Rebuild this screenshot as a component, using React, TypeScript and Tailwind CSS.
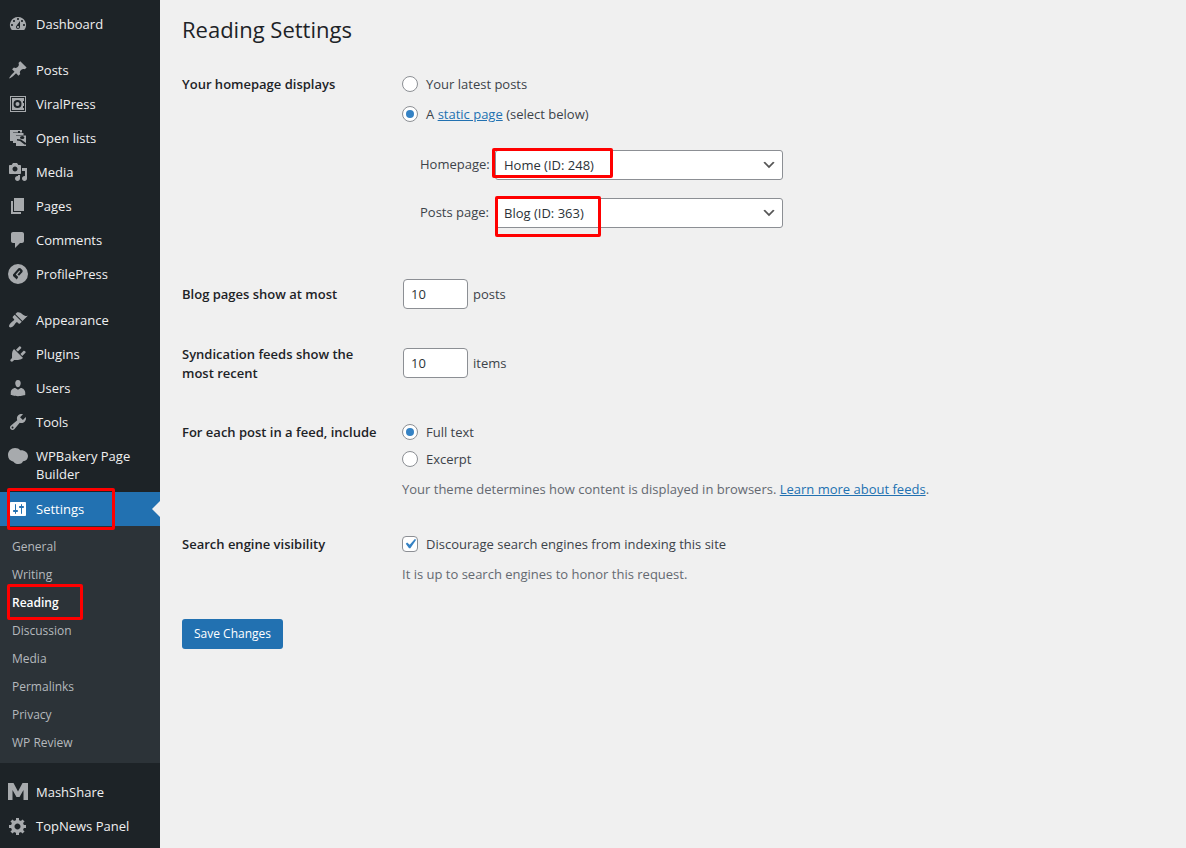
import { useState } from "react";
import type { ReactNode } from "react";
import clsx from "clsx";

type MenuItem = {
  label: string;
  icon: ReactNode;
  tall?: boolean;
};

function Icon({ d }: { d: string }) {
  return (
    <svg viewBox="0 0 20 20" className="size-5" fill="currentColor" fillRule="evenodd" aria-hidden="true">
      <path d={d} />
    </svg>
  );
}

const icons = {
  dashboard:
    "M3.76 16h12.48A7.998 7.998 0 0 0 10 3a7.998 7.998 0 0 0-6.24 13zM10 4c.55 0 1 .45 1 1s-.45 1-1 1-1-.45-1-1 .45-1 1-1zM6 6c.55 0 1 .45 1 1s-.45 1-1 1-1-.45-1-1 .45-1 1-1zm8 0c.55 0 1 .45 1 1s-.45 1-1 1-1-.45-1-1 .45-1 1-1zm-5.37 5.55L12 7v6c0 1.1-.9 2-2 2s-2-.9-2-2c0-.57.24-1.08.63-1.45zM4 10c.55 0 1 .45 1 1s-.45 1-1 1-1-.45-1-1 .45-1 1-1zm12 0c.55 0 1 .45 1 1s-.45 1-1 1-1-.45-1-1 .45-1 1-1zm-5 3c0-.55-.45-1-1-1s-1 .45-1 1 .45 1 1 1 1-.45 1-1z",
  post: "M10.44 3.02l1.82-1.82 6.36 6.35-1.83 1.82c-1.05-.68-2.48-.57-3.41.36l-.75.75c-.92.93-1.04 2.35-.35 3.41l-1.83 1.82-2.41-2.41-2.8 2.79c-.42.42-3.38 2.71-3.8 2.29s1.86-3.39 2.28-3.81l2.79-2.79L4.1 9.36l1.83-1.82c1.05.69 2.48.57 3.4-.36l.75-.75c.93-.92 1.05-2.35.36-3.41z",
  vault:
    "M2 2h16v16H2zM3 3v14h14V3zM4 4h12v3h-1v2h1v3h-1v2h1v2H4zM9.500 6a4 4 0 1 0 0 8 4 4 0 0 0 0-8zM9.500 8a2 2 0 1 1 0 4 2 2 0 0 1 0-4z",
  images:
    "M2 2h12v2.500H5V13H2zM5 5h10.500v2H8v8H5zM8 7.500h10V18H8zM12 9.500a2.200 1.500 0 1 0 4.400 0 2.200 1.500 0 1 0-4.400 0zM9 12.500l3 .5 4.500 3.500H18V15l-5-3.500-4-.5zM10 3h2v1.500h-2z",
  media:
    "M13 11V4c0-.55-.45-1-1-1h-1.67L9 1H5L3.67 3H2c-.55 0-1 .45-1 1v7c0 .55.45 1 1 1h10c.55 0 1-.45 1-1zM7 4.5c1.38 0 2.5 1.12 2.5 2.5S8.38 9.5 7 9.5 4.5 8.38 4.5 7 5.62 4.5 7 4.5zM14 6h5v10.5c0 1.38-1.12 2.5-2.5 2.5S14 17.88 14 16.5s1.12-2.5 2.5-2.5c.17 0 .34.02.5.05V9h-3V6zm-4 8.05V13h2v3.5c0 1.38-1.12 2.5-2.5 2.5S7 17.88 7 16.5 8.12 14 9.5 14c.17 0 .34.02.5.05z",
  page: "M6 15V2h10v13H6zm-1 1h8v2H3V5h2v11z",
  comments:
    "M5 2h9c1.1 0 2 .9 2 2v7c0 1.1-.9 2-2 2h-2l-5 5v-5H5c-1.1 0-2-.9-2-2V4c0-1.1.9-2 2-2z",
  profile:
    "M10 0a10 10 0 1 0 0 20 10 10 0 0 0 0-20zM5 10.500L10.500 4.300Q11.500 3.500 12.500 4.300L14.300 6Q15.200 7 14.300 8.200L11 11.800 9.500 10.400 12.300 7.300 11.400 6.500 7.700 10.600 10.200 13 8.800 15.500 5 12z",
  appearance:
    "M14.48 11.06L7.41 3.99l1.5-1.5c.5-.56 2.3-.47 3.51.32 1.21.8 1.43 1.28 2.91 2.1 1.18.64 2.45 1.26 4.45.85zm-.71.71L6.7 4.7 4.93 6.47c-.39.39-.39 1.02 0 1.41l1.06 1.06c.39.39.39 1.03 0 1.42-.6.6-1.43 1.11-2.21 1.69-.35.26-.7.53-1.01.84C1.43 14.23.4 16.08 1.4 17.07c.99 1 2.84-.03 4.18-1.36.31-.31.58-.66.85-1.02.57-.78 1.08-1.61 1.69-2.21.39-.39 1.02-.39 1.41 0l1.06 1.06c.39.39 1.02.39 1.41 0z",
  plugins:
    "M13.11 4.36L9.87 7.6 8 5.73l3.24-3.24c.35-.34 1.05-.2 1.56.32.52.51.66 1.21.31 1.55zm-8 1.77l.91-1.12 9.01 9.01-1.19.84c-.71.71-2.63 1.16-3.82 1.16H6.14L4.9 17.26c-.59.59-1.54.59-2.12 0-.59-.58-.59-1.53 0-2.12l1.24-1.24v-3.88c0-1.13.4-3.19 1.09-3.89zm7.26 3.97l3.24-3.24c.34-.35 1.04-.21 1.55.31.52.51.66 1.21.31 1.55l-3.24 3.25z",
  users:
    "M10 9.25c-2.27 0-2.73-3.44-2.73-3.44C7 4.02 7.82 2 9.97 2c2.16 0 2.98 2.02 2.71 3.81 0 0-.41 3.44-2.68 3.44zm0 2.57L12.72 10c2.39 0 4.52 2.33 4.52 4.53v2.49s-3.65 1.13-7.24 1.13c-3.65 0-7.24-1.13-7.24-1.13v-2.49c0-2.25 1.94-4.48 4.47-4.48z",
  tools:
    "M16.68 9.77c-1.34 1.34-3.3 1.67-4.95.99l-5.41 6.52c-.99.99-2.59.99-3.58 0s-.99-2.59 0-3.57l6.52-5.42c-.68-1.65-.35-3.61.99-4.95 1.28-1.28 3.12-1.62 4.72-1.06l-2.89 2.89 2.82 2.82 2.86-2.87c.53 1.58.18 3.39-1.08 4.65zM3.81 16.21c.4.39 1.04.39 1.43 0 .4-.4.4-1.04 0-1.43-.39-.4-1.03-.4-1.43 0-.39.39-.39 1.03 0 1.43z",
  bakery:
    "M0 9C0 5 3 2 7 2c2.500 0 4 .800 5.200 2.200C16.500 3.800 20 6.500 20 10c0 3-2 5-5 5.300-.5 1.600-2 2.700-4.500 2.700-2.300 0-4-.700-5-2.300C2 15 0 12.500 0 9z",
  settings:
    "M18 16V4c0-.55-.45-1-1-1H3c-.55 0-1 .45-1 1v12c0 .55.45 1 1 1h14c.55 0 1-.45 1-1zM8 11h1c.55 0 1 .45 1 1s-.45 1-1 1H8v1.5c0 .28-.22.5-.5.5s-.5-.22-.5-.5V13H6c-.55 0-1-.45-1-1s.45-1 1-1h1V5.5c0-.28.22-.5.5-.5s.5.22.5.5V11zm5-2h-1c-.55 0-1-.45-1-1s.45-1 1-1h1V5.5c0-.28.22-.5.5-.5s.5.22.5.5V7h1c.55 0 1 .45 1 1s-.45 1-1 1h-1v5.5c0 .28-.22.5-.5.5s-.5-.22-.5-.5V9z",
  mash: "M0 18V1h5.500L10 9.500 14.500 1H20v17h-4.500V8L11.500 15h-3L4.500 8v10z",
  generic:
    "M18 12h-2.18c-.17.7-.44 1.35-.81 1.93l1.54 1.54-2.1 2.1-1.54-1.54c-.58.36-1.23.63-1.91.79V19H8v-2.18c-.68-.16-1.33-.43-1.91-.79l-1.54 1.54-2.12-2.12 1.54-1.54c-.36-.58-.63-1.23-.79-1.91H1V9.03h2.17c.16-.7.44-1.35.8-1.94L2.43 5.55l2.1-2.1 1.54 1.54c.58-.37 1.24-.64 1.93-.81V2h3v2.18c.68.16 1.33.43 1.91.79l1.54-1.54 2.12 2.12-1.54 1.54c.36.59.64 1.24.8 1.94H18V12zm-8.5 1.5c1.66 0 3-1.34 3-3s-1.34-3-3-3-3 1.34-3 3 1.34 3 3 3z",
};

const contentMenu: MenuItem[] = [
  { label: "Posts", icon: <Icon d={icons.post} /> },
  { label: "ViralPress", icon: <Icon d={icons.vault} /> },
  { label: "Open lists", icon: <Icon d={icons.images} /> },
  { label: "Media", icon: <Icon d={icons.media} /> },
  { label: "Pages", icon: <Icon d={icons.page} /> },
  { label: "Comments", icon: <Icon d={icons.comments} /> },
  { label: "ProfilePress", icon: <Icon d={icons.profile} /> },
];

const adminMenu: MenuItem[] = [
  { label: "Appearance", icon: <Icon d={icons.appearance} /> },
  { label: "Plugins", icon: <Icon d={icons.plugins} /> },
  { label: "Users", icon: <Icon d={icons.users} /> },
  { label: "Tools", icon: <Icon d={icons.tools} /> },
  { label: "WPBakery Page Builder", icon: <Icon d={icons.bakery} />, tall: true },
];

const settingsMenu = [
  "General",
  "Writing",
  "Reading",
  "Discussion",
  "Media",
  "Permalinks",
  "Privacy",
  "WP Review",
];

const extraMenu: MenuItem[] = [
  { label: "MashShare", icon: <Icon d={icons.mash} /> },
  { label: "TopNews Panel", icon: <Icon d={icons.generic} /> },
];

function Highlight({ className }: { className: string }) {
  return (
    <span
      aria-hidden="true"
      className={clsx("pointer-events-none absolute z-10 rounded-xs border-3 border-[#ff0000]", className)}
    />
  );
}

function MenuList({ items }: { items: MenuItem[] }) {
  return (
    <ul>
      {items.map((item) => (
        <li key={item.label}>
          <a
            href="#"
            className={clsx(
              "flex gap-2 px-2 py-2 leading-[18px] text-[#f0f0f1]",
              item.tall ? "min-h-[53px]" : "h-[34px]"
            )}
          >
            <span className="-mt-px shrink-0 text-[#a7aaad]">{item.icon}</span>
            <span>{item.label}</span>
          </a>
        </li>
      ))}
    </ul>
  );
}

function Sidebar() {
  return (
    <nav aria-label="Admin menu" className="w-40 shrink-0 bg-[#1d2327] pt-[7px] text-[13px]">
      <MenuList items={[{ label: "Dashboard", icon: <Icon d={icons.dashboard} /> }]} />
      <div className="h-3" />
      <MenuList items={contentMenu} />
      <div className="h-3" />
      <MenuList items={adminMenu} />

      <div className="relative">
        <a href="#" className="flex h-[34px] gap-2 bg-[#2271b1] px-2 py-2 leading-[18px] text-white">
          <span className="-mt-px shrink-0">
            <Icon d={icons.settings} />
          </span>
          <span>Settings</span>
        </a>
        <span className="absolute top-[9px] right-0 border-y-8 border-r-8 border-y-transparent border-r-[#f0f0f0]" />
        <Highlight className="-top-1 left-[7px] h-[42px] w-[108px]" />
      </div>
      <ul className="bg-[#2c3338] pt-[7px] pb-1.5 text-xs">
        {settingsMenu.map((label) => (
          <li key={label} className="relative">
            <a
              href="#"
              className={clsx(
                "flex h-7 items-center px-3",
                label === "Reading" ? "font-semibold text-white" : "text-[#b5b9bd]"
              )}
            >
              {label}
            </a>
            {label === "Reading" && <Highlight className="-top-[5px] left-[7px] h-9 w-[76px]" />}
          </li>
        ))}
      </ul>

      <div className="h-3" />
      <MenuList items={extraMenu} />
    </nav>
  );
}

type RadioProps = {
  name: string;
  checked: boolean;
  onChange: () => void;
  children: ReactNode;
};

function Radio({ name, checked, onChange, children }: RadioProps) {
  return (
    <label className="flex h-5 items-center gap-2">
      <input
        type="radio"
        name={name}
        checked={checked}
        onChange={onChange}
        className="grid size-4 appearance-none place-items-center rounded-full border border-[#8c8f94] bg-white checked:before:size-2 checked:before:rounded-full checked:before:bg-[#3582c4]"
      />
      <span>{children}</span>
    </label>
  );
}

type PageSelectProps = {
  id: string;
  label: string;
  options: string[];
  highlight: string;
};

function PageSelect({ id, label, options, highlight }: PageSelectProps) {
  return (
    <div className="flex">
      <label htmlFor={id} className="w-[75px] shrink-0 pt-1 whitespace-nowrap">
        {label}
      </label>
      <div className="relative w-72">
        <select
          id={id}
          className="block h-[30px] w-full appearance-none rounded-[3px] border border-[#8c8f94] bg-white pr-6 pl-2 text-[#2c3338]"
        >
          {options.map((option) => (
            <option key={option}>{option}</option>
          ))}
        </select>
        <svg
          viewBox="0 0 20 20"
          className="pointer-events-none absolute top-[7px] right-[6px] size-4"
          aria-hidden="true"
        >
          <path d="M5 6l5 5 5-5 2 1-7 7-7-7 2-1z" fill="#555" />
        </svg>
        <Highlight className={highlight} />
      </div>
    </div>
  );
}

type SettingRowProps = {
  title: string;
  className?: string;
  titleClassName?: string;
  children: ReactNode;
};

function SettingRow({ title, className, titleClassName, children }: SettingRowProps) {
  return (
    <section className={clsx("flex", className)}>
      <h2 className={clsx("w-[220px] shrink-0 pr-5 font-semibold text-[#1d2327]", titleClassName)}>
        {title}
      </h2>
      <div className="min-w-0 flex-1">{children}</div>
    </section>
  );
}

export default function App() {
  const [homepage, setHomepage] = useState("page");
  const [feed, setFeed] = useState("full");
  const [postCount, setPostCount] = useState("10");
  const [itemCount, setItemCount] = useState("10");
  const [discourage, setDiscourage] = useState(true);

  const numberInput =
    "ml-px h-[30px] w-[65px] rounded-sm border border-[#8c8f94] bg-white px-[7px] text-[#2c3338]";
  const link = "text-[#2271b1] underline";

  return (
    <div className="flex min-h-screen bg-[#f0f0f0] font-['Open_Sans','Noto_Sans',sans-serif] text-[13px] leading-5 text-[#3c434a]">
      <Sidebar />
      <main className="min-w-0 flex-1 px-[22px] pt-[11px]">
        <h1 className="text-[22px] leading-9 text-[#1d2327]">Reading Settings</h1>

        <form onSubmit={(e) => e.preventDefault()}>
          <SettingRow title="Your homepage displays" className="mt-[27px]">
            <div className="flex flex-col gap-[10px]">
              <Radio name="show_on_front" checked={homepage === "posts"} onChange={() => setHomepage("posts")}>
                Your latest posts
              </Radio>
              <Radio name="show_on_front" checked={homepage === "page"} onChange={() => setHomepage("page")}>
                A{" "}
                <a href="#" className={link}>
                  static page
                </a>{" "}
                (select below)
              </Radio>
            </div>
            <div className="mt-[26px] ml-[18px] flex flex-col gap-[18px]">
              <PageSelect
                id="page_on_front"
                label="Homepage:"
                options={["Home (ID: 248)"]}
                highlight="-top-0.5 -left-[3px] h-[30px] w-[121px]"
              />
              <PageSelect
                id="page_for_posts"
                label="Posts page:"
                options={["Blog (ID: 363)"]}
                highlight="-top-0.5 left-0 h-[41px] w-[106px]"
              />
            </div>
          </SettingRow>

          <SettingRow title="Blog pages show at most" className="mt-[51px]" titleClassName="pt-[5px]">
            <label className="flex items-center gap-[5px]">
              <input
                type="text"
                inputMode="numeric"
                value={postCount}
                onChange={(e) => setPostCount(e.target.value)}
                className={numberInput}
              />
              posts
            </label>
          </SettingRow>

          <SettingRow
            title="Syndication feeds show the most recent"
            className="mt-[35px]"
            titleClassName="pt-px leading-[19px]"
          >
            <label className="flex items-center gap-[5px] pt-1">
              <input
                type="text"
                inputMode="numeric"
                value={itemCount}
                onChange={(e) => setItemCount(e.target.value)}
                className={numberInput}
              />
              items
            </label>
          </SettingRow>

          <SettingRow title="For each post in a feed, include" className="mt-[39px]">
            <div className="flex flex-col gap-[7px]">
              <Radio name="rss_use_excerpt" checked={feed === "full"} onChange={() => setFeed("full")}>
                Full text
              </Radio>
              <Radio name="rss_use_excerpt" checked={feed === "excerpt"} onChange={() => setFeed("excerpt")}>
                Excerpt
              </Radio>
            </div>
            <p className="mt-[10px] text-[#646970]">
              Your theme determines how content is displayed in browsers.{" "}
              <a href="#" className={link}>
                Learn more about feeds
              </a>
              .
            </p>
          </SettingRow>

          <SettingRow title="Search engine visibility" className="mt-[35px]">
            <label className="flex h-5 items-center gap-2">
              <span className="relative size-4">
                <input
                  type="checkbox"
                  checked={discourage}
                  onChange={(e) => setDiscourage(e.target.checked)}
                  className="block size-4 appearance-none rounded-sm border border-[#8c8f94] bg-white"
                />
                {discourage && (
                  <svg
                    viewBox="0 0 20 20"
                    className="pointer-events-none absolute -top-0.5 -left-0.5 size-5"
                    aria-hidden="true"
                  >
                    <path d="M14.830 4.890l1.340.940-5.810 8.380H9.020L5.780 9.670l1.340-1.250 2.570 2.400z" fill="#3582c4" />
                  </svg>
                )}
              </span>
              Discourage search engines from indexing this site
            </label>
            <p className="mt-[10px] text-[#646970]">It is up to search engines to honor this request.</p>
          </SettingRow>

          <button
            type="submit"
            className="mt-[35px] h-[30px] rounded-[3px] bg-[#2271b1] px-3 text-xs text-white"
          >
            Save Changes
          </button>
        </form>
      </main>
    </div>
  );
}
